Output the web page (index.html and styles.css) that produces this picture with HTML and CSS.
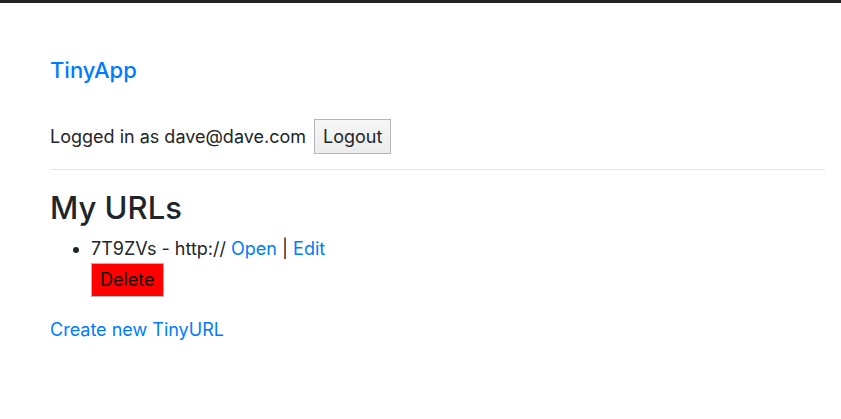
FILE: index.html
```html
<!DOCTYPE html>
<html>
<head>
<meta charset="utf-8">
<link rel="stylesheet" href="styles.css">
</head>
<body>
<div class="topbar"></div>
<div class="page">
  <nav class="nav">
    <a class="brand" href="#">TinyApp</a>
  </nav>
  <div class="login">
    <span>Logged in as dave@dave.com</span>
    <button class="btn">Logout</button>
  </div>
  <hr class="rule">
  <h3 class="title">My URLs</h3>
  <ul class="urls">
    <li>
      <div>7T9ZVs - http:// <a href="#">Open</a> | <a href="#">Edit</a></div>
      <button class="btn btn-delete">Delete</button>
    </li>
  </ul>
  <a class="create" href="#">Create new TinyURL</a>
</div>
</body>
</html>
```

FILE: styles.css
```css
html, body {
  margin: 0;
  padding: 0;
  background: #fff;
}
body {
  font-family: Inter, "Liberation Sans", sans-serif;
  font-size: 18px;
  line-height: 26px;
  color: #212529;
}
a {
  color: #007bff;
  text-decoration: none;
}
.topbar {
  height: 3px;
  background: #222;
}
.page {
  padding: 0 16px 0 50px;
}
.nav {
  padding-top: 51px;
  height: 32px;
}
.brand {
  font-size: 22px;
  line-height: 32px;
  font-weight: 500;
}
.login {
  margin-top: 33px;
  display: flex;
  align-items: center;
  gap: 8px;
}
.btn {
  font-family: inherit;
  font-size: 18px;
  color: #212529;
  background: linear-gradient(#f6f6f6, #ececec);
  border: 1px solid #b5b5b5;
  padding: 4px 8px;
  line-height: 25px;
  border-radius: 0;
}
.rule {
  margin: 15px 0 0;
  border: 0;
  border-top: 1px solid #e5e5e5;
}
.title {
  margin: 19px 0 0;
  font-size: 31px;
  line-height: 38px;
  font-weight: 500;
}
.urls {
  margin: 9px 0 0;
  padding-left: 41px;
}
.btn-delete {
  background: #ff0000;
  color: #111;
  margin-top: 1px;
  padding: 4px 8px;
  line-height: 24px;
}
.create {
  display: inline-block;
  margin-top: 20px;
}
```
